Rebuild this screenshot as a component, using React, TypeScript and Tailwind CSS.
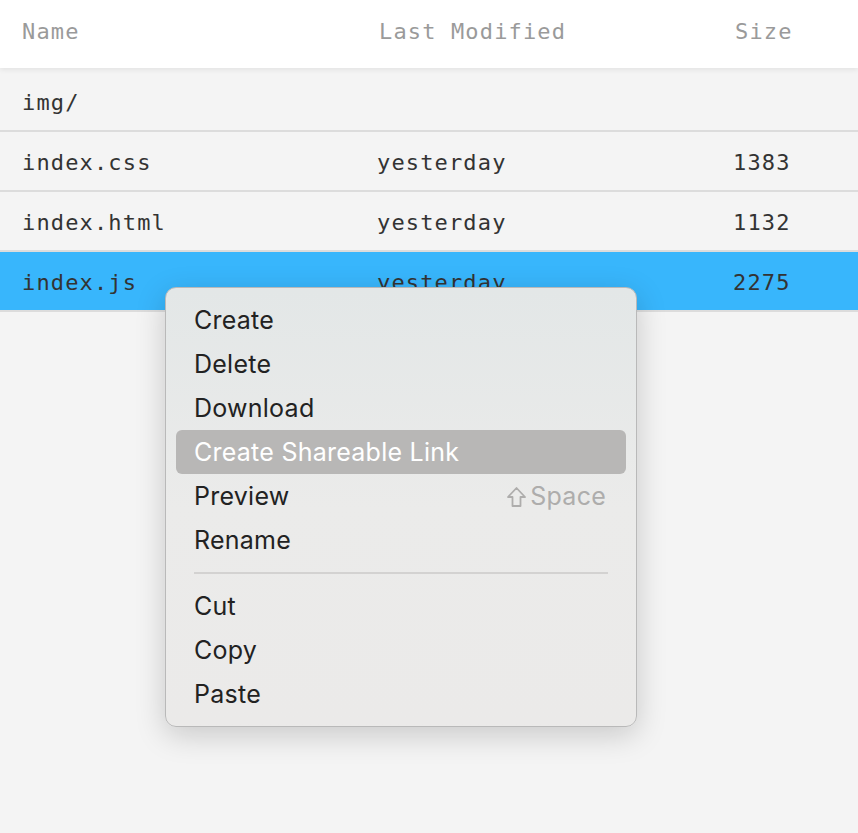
const files = [
    { name: "img/", modified: "", size: "" },
    { name: "index.css", modified: "yesterday", size: "1383" },
    { name: "index.html", modified: "yesterday", size: "1132" },
    { name: "index.js", modified: "yesterday", size: "2275", selected: true },
];

const menuGroups = [
    [
        { label: "Create" },
        { label: "Delete" },
        { label: "Download" },
        { label: "Create Shareable Link", active: true },
        { label: "Preview", shortcut: "Space" },
        { label: "Rename" },
    ],
    [{ label: "Cut" }, { label: "Copy" }, { label: "Paste" }],
];

const ShiftIcon = () => (
    <svg width="21" height="22" viewBox="0 0 21 22" fill="none" className="mr-[3px]">
        <path
            d="M10.5 2 L19 11 H14.5 V20 H6.5 V11 H2 Z"
            stroke="currentColor"
            strokeWidth="1.8"
            strokeLinejoin="round"
        />
    </svg>
);

const ContextMenu = () => {
    return (
        <div
            className="absolute left-[165px] top-[287px] w-[472px] rounded-[11px] border border-[#b9b9b9]
                       bg-gradient-to-b from-[#e3e7e7] via-[#ebebea] to-[#ebeae9] py-[10px]
                       shadow-[0_8px_30px_rgba(0,0,0,0.18)] font-['Inter','Noto_Sans',sans-serif]"
        >
            {menuGroups.map((group, gi) => (
                <div key={gi}>
                    {gi > 0 && (
                        <div className="h-[22px] flex items-center px-[28px]">
                            <div className="w-full h-[2px] bg-[#d3d2d1]" />
                        </div>
                    )}
                    {group.map((item) => (
                        <div key={item.label} className="px-[10px]">
                            <div
                                className={`h-[44px] flex items-center justify-between pt-[2px] pl-[18px] pr-[20px] rounded-[6px] text-[25px] tracking-[0.25px] ${
                                    item.active ? "bg-[#b8b7b6] text-white" : "text-[#222222]"
                                }`}
                            >
                                <span>{item.label}</span>
                                {item.shortcut && (
                                    <span className="flex items-center text-[#aeadac]">
                                        <ShiftIcon />
                                        {item.shortcut}
                                    </span>
                                )}
                            </div>
                        </div>
                    ))}
                </div>
            ))}
        </div>
    );
};

const App = () => {
    return (
        <div className="relative min-h-[833px] bg-[#f4f4f4] font-['DejaVu_Sans_Mono',monospace] text-[22px] tracking-[1.15px] overflow-hidden">
            <div className="relative z-10 h-[68px] bg-white flex items-center pb-[6px] text-[#9a9a9a] shadow-[0_2px_5px_rgba(0,0,0,0.07)]">
                <div className="w-[379px] pl-[22px]">Name</div>
                <div className="w-[356px]">Last Modified</div>
                <div>Size</div>
            </div>
            <div className="pt-[4px]">
                {files.map((file) => (
                    <div
                        key={file.name}
                        className={`h-[60px] flex items-center pt-[3px] border-b-2 border-[#dcdcdc] text-[#333333] ${
                            file.selected ? "bg-[#38b6fc]" : ""
                        }`}
                    >
                        <div className="w-[377px] pl-[22px]">{file.name}</div>
                        <div className="w-[356px]">{file.modified}</div>
                        <div>{file.size}</div>
                    </div>
                ))}
            </div>
            <ContextMenu />
        </div>
    );
};

export default App;
